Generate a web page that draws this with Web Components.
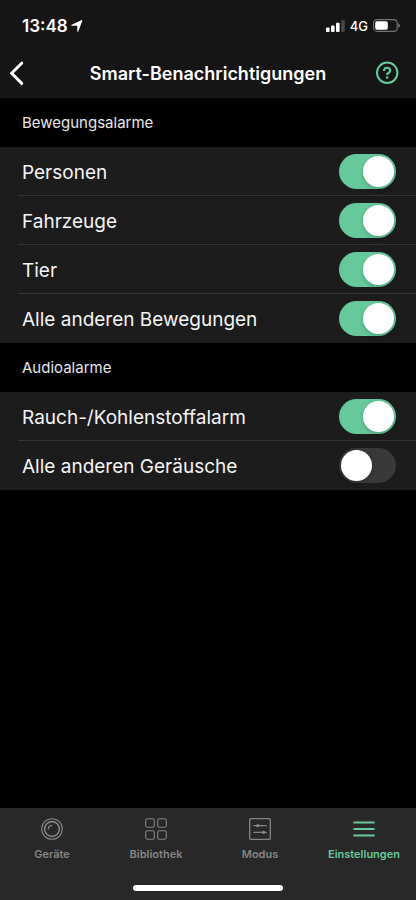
<!DOCTYPE html>
<html lang="de">
<head>
<meta charset="utf-8">
<meta name="viewport" content="width=device-width, initial-scale=1">
<title>Smart-Benachrichtigungen</title>
<style>
  html, body { margin: 0; background: #000; }
  body {
    --accent: #66c99b;
    --bar: #151515;
    --row: #1c1c1c;
    --line: #343434;
    font-family: Inter, "Liberation Sans", sans-serif;
    color: #f4f4f4;
  }
</style>
</head>
<body>
<settings-screen>
  <status-bar slot="top" time="13:48" network="4G"></status-bar>
  <nav-header slot="top">Smart-Benachrichtigungen</nav-header>
  <settings-group heading="Bewegungsalarme">
    <toggle-row label="Personen" on></toggle-row>
    <toggle-row label="Fahrzeuge" on></toggle-row>
    <toggle-row label="Tier" on></toggle-row>
    <toggle-row label="Alle anderen Bewegungen" on></toggle-row>
  </settings-group>
  <settings-group heading="Audioalarme">
    <toggle-row label="Rauch-/Kohlenstoffalarm" on></toggle-row>
    <toggle-row label="Alle anderen Geräusche"></toggle-row>
  </settings-group>
  <tab-bar slot="bottom">
    <tab-item>
      <svg slot="icon" width="22" height="22" viewBox="0 0 22 22" fill="none" stroke="currentColor"><circle cx="11" cy="11" r="10.3" stroke-width="1.1"/><circle cx="11" cy="11" r="7.4" stroke-width="1.6"/><path d="M7.3 10.8A3.7 3.7 0 0 1 10.6 7.4" stroke-width="1.2" stroke-linecap="round"/></svg>
      Geräte
    </tab-item>
    <tab-item>
      <svg slot="icon" width="22" height="22" viewBox="0 0 22 22" fill="none" stroke="currentColor" stroke-width="1.1"><rect x=".7" y=".7" width="8.6" height="8.6" rx="1.8"/><rect x="12.7" y=".7" width="8.6" height="8.6" rx="1.8"/><rect x=".7" y="12.7" width="8.6" height="8.6" rx="1.8"/><rect x="12.7" y="12.7" width="8.6" height="8.6" rx="1.8"/></svg>
      Bibliothek
    </tab-item>
    <tab-item>
      <svg slot="icon" width="22" height="22" viewBox="0 0 22 22" fill="none" stroke="currentColor" stroke-width="1.3"><rect x=".7" y=".7" width="20.6" height="20.6" rx="1"/><path d="M4.8 7.7h12.4M4.8 14.4h12.4" stroke-linecap="round"/><circle cx="8.8" cy="7.7" r="1.6" fill="currentColor" stroke="none"/><circle cx="14.6" cy="14.4" r="1.6" fill="currentColor" stroke="none"/></svg>
      Modus
    </tab-item>
    <tab-item current>
      <svg slot="icon" width="22" height="22" viewBox="0 0 22 22" fill="none" stroke="currentColor" stroke-width="2.1" stroke-linecap="round"><path d="M1.2 4.5h19.6M1.2 11h19.6M1.2 17.5h19.6"/></svg>
      Einstellungen
    </tab-item>
  </tab-bar>
</settings-screen>

<script>
class BaseElement extends HTMLElement {
  connectedCallback() {
    if (this.shadowRoot) return;
    this.attachShadow({ mode: "open" }).innerHTML = this.render();
  }
}

customElements.define("settings-screen", class extends BaseElement {
  render() {
    return `<style>
      :host { display: flex; flex-direction: column; min-height: 100vh; }
      header { background: var(--bar); }
      main { flex: 1; }
    </style>
    <header><slot name="top"></slot></header>
    <main><slot></slot></main>
    <slot name="bottom"></slot>`;
  }
});

customElements.define("status-bar", class extends BaseElement {
  render() {
    return `<style>
      :host { display: flex; align-items: center; justify-content: space-between; height: 48px; padding: 3px 16px 0 22px; box-sizing: border-box; color: #fff; }
      div { display: flex; align-items: center; gap: 3px; }
      .right { gap: 5px; }
      time { font-size: 17px; line-height: 22px; font-weight: 600; }
      span { font-size: 13px; line-height: 16px; font-weight: 500; }
      svg { display: block; }
    </style>
    <div>
      <time>${this.getAttribute("time")}</time>
      <svg width="12" height="12" viewBox="0 0 12 12" fill="#fff"><path d="M11.4.6 7.3 11.4a.5.5 0 0 1-1-.2V5.8H.8a.5.5 0 0 1-.2-1L10.8.1a.5.5 0 0 1 .6.5z"/></svg>
    </div>
    <div class="right">
      <svg width="19" height="12" viewBox="0 0 19 12" fill="#fff"><rect x="0" y="7.5" width="3.6" height="4.5" rx="1"/><rect x="5" y="5.5" width="3.6" height="6.5" rx="1"/><rect x="10" y="2.7" width="3.6" height="9.3" rx="1"/><rect x="15.2" y="0" width="3.6" height="12" rx="1" fill="#474747"/></svg>
      <span>${this.getAttribute("network")}</span>
      <svg width="27" height="13" viewBox="0 0 27 13"><rect x=".6" y=".6" width="23.6" height="11.8" rx="3.4" fill="none" stroke="#757575" stroke-width="1.1"/><rect x="2.2" y="2.2" width="12.6" height="8.6" rx="1.7" fill="#fff"/><path d="M25.4 4.4c1.8.7 1.8 3.5 0 4.2z" fill="#858585"/></svg>
    </div>`;
  }
});

customElements.define("nav-header", class extends BaseElement {
  render() {
    return `<style>
      :host { display: grid; grid-template-columns: 40px 1fr 40px; align-items: center; height: 50px; color: #fff; }
      h1 { margin: 0; padding-top: 2px; text-align: center; font-size: 18px; line-height: 24px; font-weight: 600; white-space: nowrap; }
      button { display: flex; align-items: center; height: 44px; padding: 0; border: 0; background: none; color: inherit; }
      .back { padding-left: 9px; }
      .help { color: var(--accent); }
    </style>
    <button class="back" aria-label="Zurück"><svg width="16" height="24" viewBox="0 0 16 24" fill="none" stroke="currentColor" stroke-width="3" stroke-linecap="round" stroke-linejoin="round"><path d="M12.7 2.2 2.6 12.3l10.1 10.1"/></svg></button>
    <h1><slot></slot></h1>
    <button class="help" aria-label="Hilfe"><svg width="23" height="24" viewBox="0 0 23 24" fill="none" stroke="currentColor" stroke-width="2"><circle cx="11.2" cy="11.8" r="10.2"/><path d="M8 9.9c0-4.1 6.2-4.1 6.2-.4 0 2.3-3.1 2.2-3.1 4.6" stroke-width="2.2"/><path d="M11.1 15.4v2.3" stroke-width="2.4"/></svg></button>`;
  }
});

customElements.define("settings-group", class extends BaseElement {
  render() {
    return `<style>
      :host { display: block; }
      h2 { margin: 0; padding: 0 22px; font-size: 15px; line-height: 49px; font-weight: 400; color: #e6e6e6; }
      div { background: var(--row); }
    </style>
    <section><h2>${this.getAttribute("heading")}</h2><div><slot></slot></div></section>`;
  }
});

customElements.define("toggle-row", class extends BaseElement {
  render() {
    return `<style>
      :host { display: block; padding-left: 18px; }
      .row { display: flex; align-items: center; justify-content: space-between; height: 49px; padding: 0 20px 0 4px; box-sizing: border-box; border-bottom: 1px solid var(--line); }
      :host(:last-child) .row { border-color: transparent; }
      label { flex: 1; padding-top: 3px; font-size: 19px; line-height: 45px; }
      input { appearance: none; flex: none; display: flex; width: 57px; height: 35px; margin: 0; padding: 2px; box-sizing: border-box; border-radius: 18px; background: #39393b; }
      input::before { content: ""; width: 31px; height: 31px; border-radius: 50%; background: #fff; box-shadow: 0 2px 5px #0003; }
      input:checked { justify-content: flex-end; background: var(--accent); }
    </style>
    <div class="row">
      <label for="switch">${this.getAttribute("label")}</label>
      <input id="switch" type="checkbox" role="switch" ${this.hasAttribute("on") ? "checked" : ""}>
    </div>`;
  }
});

customElements.define("tab-bar", class extends BaseElement {
  render() {
    return `<style>
      :host { display: block; background: #282828; }
      nav { display: grid; grid-template-columns: repeat(4, 1fr); height: 77px; padding-top: 10px; box-sizing: border-box; }
      .home { width: 36%; height: 6px; margin: 0 auto; border-radius: 3px; background: #fff; }
      footer { height: 15px; }
    </style>
    <nav><slot></slot></nav>
    <footer><div class="home"></div></footer>`;
  }
});

customElements.define("tab-item", class extends BaseElement {
  render() {
    const current = this.hasAttribute("current");
    return `<style>
      :host { display: block; color: #858585; }
      :host([current]) { color: var(--accent); }
      a { display: flex; flex-direction: column; align-items: center; gap: 6px; color: inherit; text-decoration: none; font-size: 11px; line-height: 16px; font-weight: 600; }
      ::slotted(svg) { display: block; }
    </style>
    <a href="#" ${current ? 'aria-current="page"' : ""}><slot name="icon"></slot><span><slot></slot></span></a>`;
  }
});
</script>
</body>
</html>
